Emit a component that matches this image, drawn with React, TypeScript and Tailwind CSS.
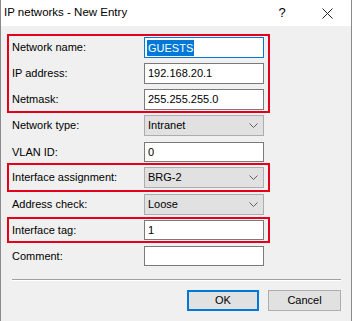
const font = { fontFamily: '"Liberation Sans", Arial, sans-serif' };

const Chevron = () => (
  <svg width="9" height="5" viewBox="0 0 9 5" className="shrink-0">
    <path d="M0.5 0.5 L4.5 4.5 L8.5 0.5" fill="none" stroke="#606060" strokeWidth="1" />
  </svg>
);

const TextBox = ({ value, focused, h = 'h-[21px]' }: { value: string; focused?: boolean; h?: string }) => (
  <div
    className={`w-[120px] ${h} bg-white border flex items-center pl-[2px] ${
      focused ? 'border-[#0078d7]' : 'border-[#7a7a7a]'
    }`}
  >
    {focused ? (
      <span className="bg-[#0078d7] text-white leading-[16px] px-[1px]">{value}</span>
    ) : (
      <span className="pl-[1px]">{value}</span>
    )}
  </div>
);

const Select = ({ value }: { value: string }) => (
  <div className="w-[120px] h-[21px] bg-[#e1e1e1] border border-[#adadad] flex items-center justify-between pl-[3px] pr-[5px]">
    <span>{value}</span>
    <Chevron />
  </div>
);

const Row = ({ label, children, inBox, className = '' }: { label: string; children: React.ReactNode; inBox?: boolean; className?: string }) => (
  <div className={`flex items-center ${inBox ? 'pl-[3px]' : 'pl-[5px]'} ${className}`}>
    <span className="w-[132px] shrink-0">{label}</span>
    {children}
  </div>
);

const Box = ({ children, className = '' }: { children: React.ReactNode; className?: string }) => (
  <div className={`w-[263px] border-2 border-[#e2001a] ${className}`}>{children}</div>
);

export default function App() {
  return (
    <div className="w-[352px] h-[321px] bg-[#f0f0f0] border-x border-[#8a8a8a] text-[11px] text-black flex flex-col overflow-hidden" style={font}>
      <div className="h-[26px] bg-white flex items-center shrink-0">
        <span className="pl-[3px] text-[11.5px] flex-1">IP networks - New Entry</span>
        <span className="w-[10px] text-[13px] mr-[35px] text-center">?</span>
        <svg width="11" height="11" viewBox="0 0 11 11" className="mr-[18px]">
          <path d="M0.5 0.5 L10.5 10.5 M10.5 0.5 L0.5 10.5" stroke="#222" strokeWidth="1" />
        </svg>
      </div>

      <div className="pl-[6px] pt-[8px] flex flex-col">
        <Box className="py-[1px] flex flex-col gap-[5px]">
          <Row label="Network name:" inBox>
            <TextBox value="GUESTS" focused />
          </Row>
          <Row label="IP address:" inBox>
            <TextBox value="192.168.20.1" />
          </Row>
          <Row label="Netmask:" inBox>
            <TextBox value="255.255.255.0" />
          </Row>
        </Box>

        <Row label="Network type:" className="mt-[2px]">
          <Select value="Intranet" />
        </Row>
        <Row label="VLAN ID:" className="mt-[6px]">
          <TextBox value="0" h="h-[20px]" />
        </Row>

        <Box className="mt-[1px] py-[2px]">
          <Row label="Interface assignment:" inBox>
            <Select value="BRG-2" />
          </Row>
        </Box>

        <Row label="Address check:" className="mt-[2px]">
          <Select value="Loose" />
        </Row>

        <Box className="mt-[2px] py-[1px]">
          <Row label="Interface tag:" inBox>
            <TextBox value="1" h="h-[20px]" />
          </Row>
        </Box>

        <Row label="Comment:" className="mt-[3px]">
          <TextBox value="" h="h-[20px]" />
        </Row>
      </div>

      <div className="mt-[13px] ml-[11px] mr-[10px] border-t border-[#a0a0a0] border-b border-b-white" />

      <div className="mt-[9px] flex justify-end gap-[9px] pr-[10px]">
        <button className="w-[72px] h-[21px] bg-[#e1e1e1] border-2 border-[#0078d7] flex items-center justify-center">OK</button>
        <button className="w-[73px] h-[21px] bg-[#e1e1e1] border border-[#adadad] flex items-center justify-center">Cancel</button>
      </div>
    </div>
  );
}
